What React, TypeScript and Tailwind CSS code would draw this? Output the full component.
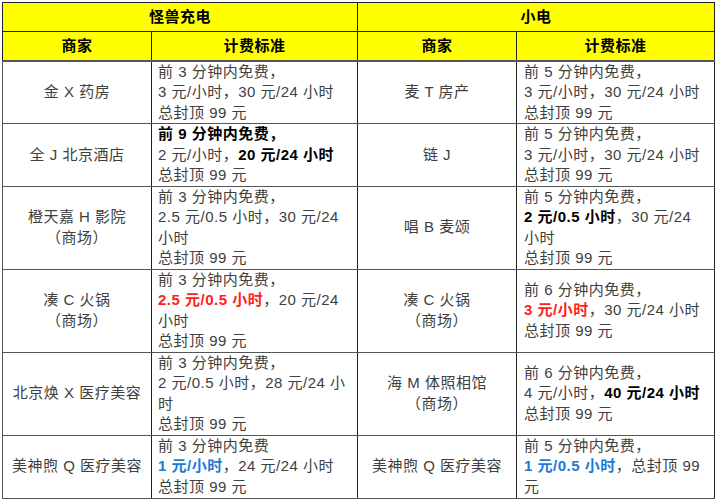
import type { ReactNode } from "react";

const B = ({ children }: { children: ReactNode }) => <span className="font-bold text-black">{children}</span>;
const R = ({ children }: { children: ReactNode }) => <span className="font-bold text-[#ff2020]">{children}</span>;
const U = ({ children }: { children: ReactNode }) => <span className="font-bold text-[#1a7bd6]">{children}</span>;

type Row = {
  h: string;
  a: ReactNode[];
  ap: ReactNode[];
  b: ReactNode[];
  bp: ReactNode[];
};

const rows: Row[] = [
  {
    h: "h-[62px]",
    a: ["金 X 药房"],
    ap: ["前 3 分钟内免费，", "3 元/小时，30 元/24 小时", "总封顶 99 元"],
    b: ["麦 T 房产"],
    bp: ["前 5 分钟内免费，", "3 元/小时，30 元/24 小时", "总封顶 99 元"],
  },
  {
    h: "h-[62px]",
    a: ["全 J 北京酒店"],
    ap: [<B>前 9 分钟内免费，</B>, <>2 元/小时，<B>20 元/24 小时</B></>, "总封顶 99 元"],
    b: ["链 J"],
    bp: ["前 5 分钟内免费，", "3 元/小时，30 元/24 小时", "总封顶 99 元"],
  },
  {
    h: "h-[83px]",
    a: ["橙天嘉 H 影院", "（商场）"],
    ap: ["前 3 分钟内免费，", "2.5 元/0.5 小时，30 元/24", "小时", "总封顶 99 元"],
    b: ["唱 B 麦颂"],
    bp: ["前 5 分钟内免费，", <><B>2 元/0.5 小时</B>，30 元/24</>, "小时", "总封顶 99 元"],
  },
  {
    h: "h-[83px]",
    a: ["凑 C 火锅", "（商场）"],
    ap: ["前 3 分钟内免费，", <><R>2.5 元/0.5 小时</R>，20 元/24</>, "小时", "总封顶 99 元"],
    b: ["凑 C 火锅", "（商场）"],
    bp: ["前 6 分钟内免费，", <><R>3 元/小时</R>，30 元/24 小时</>, "总封顶 99 元"],
  },
  {
    h: "h-[83px]",
    a: ["北京焕 X 医疗美容"],
    ap: ["前 3 分钟内免费，", "2 元/0.5 小时，28 元/24 小", "时", "总封顶 99 元"],
    b: ["海 M 体照相馆", "（商场）"],
    bp: ["前 6 分钟内免费，", <>4 元/小时，<B>40 元/24 小时</B></>, "总封顶 99 元"],
  },
  {
    h: "h-[63px]",
    a: ["美神煦 Q 医疗美容"],
    ap: ["前 3 分钟内免费", <><U>1 元/小时</U>，24 元/24 小时</>, "总封顶 99 元"],
    b: ["美神煦 Q 医疗美容"],
    bp: ["前 5 分钟内免费，", <><U>1 元/0.5 小时</U>，总封顶 99</>, "元"],
  },
];

function Lines({ items }: { items: ReactNode[] }) {
  return (
    <>
      {items.map((t, i) => (
        <div key={i} className="whitespace-nowrap">
          {t}
        </div>
      ))}
    </>
  );
}

export default function App() {
  return (
    <div className="w-[716px] h-[500px] bg-white pt-[2px] pl-[2px]">
      <table
        className="table-fixed border-collapse w-[712px] text-[15px] leading-[20.5px] tracking-[0.5px] text-[#404040]"
        style={{ fontFamily: '"Liberation Sans", "Noto Sans CJK SC", sans-serif' }}
      >
        <colgroup>
          <col className="w-[149px]" />
          <col className="w-[206px]" />
          <col className="w-[159px]" />
          <col className="w-[198px]" />
        </colgroup>
        <thead>
          <tr className="h-[29px] bg-[#ffff00] text-black font-bold">
            <th colSpan={2} className="border border-[#222] text-center">怪兽充电</th>
            <th colSpan={2} className="border border-[#222] text-center">小电</th>
          </tr>
          <tr className="h-[29px] bg-[#ffff00] text-black font-bold">
            <th className="border border-[#222] border-b-2 border-b-[#555] text-center">商家</th>
            <th className="border border-[#222] border-b-2 border-b-[#555] text-center">计费标准</th>
            <th className="border border-[#222] border-b-2 border-b-[#555] text-center">商家</th>
            <th className="border border-[#222] border-b-2 border-b-[#555] text-center">计费标准</th>
          </tr>
        </thead>
        <tbody>
          {rows.map((r, i) => (
            <tr key={i} className={r.h}>
              <td className="border border-[#555] border-r-[#222] text-center align-middle">
                <Lines items={r.a} />
              </td>
              <td className="border border-[#555] border-x-[#222] pl-[6px] align-middle">
                <Lines items={r.ap} />
              </td>
              <td className="border border-[#555] border-x-[#222] text-center align-middle">
                <Lines items={r.b} />
              </td>
              <td className="border border-[#555] border-x-[#222] pl-[7px] align-middle">
                <Lines items={r.bp} />
              </td>
            </tr>
          ))}
        </tbody>
      </table>
    </div>
  );
}
